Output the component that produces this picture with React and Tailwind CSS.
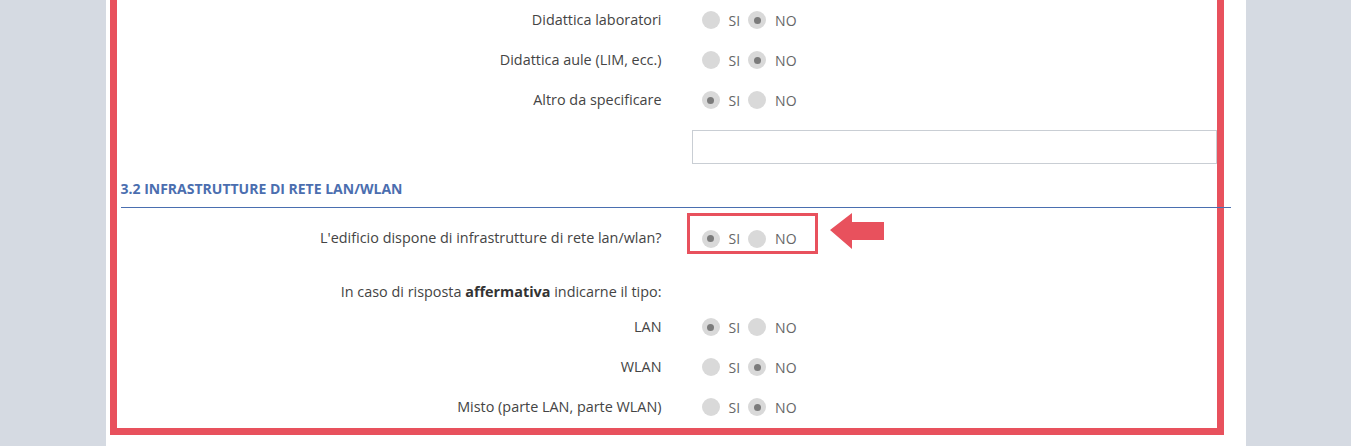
const Radio = ({ checked }) => (
  <span className="flex h-[18px] w-[18px] items-center justify-center rounded-full bg-[#d9d9d9]">
    {checked && <span className="h-[7px] w-[7px] rounded-full bg-[#7b7b7b]" />}
  </span>
);

const SiNo = ({ value }) => (
  <div className="flex items-center text-[14px] text-[#666]">
    <Radio checked={value === 'si'} />
    <span className="ml-[9px] mr-[8px]">SI</span>
    <Radio checked={value === 'no'} />
    <span className="ml-[9px]">NO</span>
  </div>
);

const Row = ({ label, value }) => (
  <div className="flex h-[40px] items-center">
    <div className="w-[545px] text-right">{label}</div>
    <div className="ml-[29px] pl-[11px]">
      <SiNo value={value} />
    </div>
  </div>
);

const Arrow = () => (
  <svg width="56" height="38" viewBox="0 0 56 38" className="ml-[11px] mt-[-1px]">
    <path d="M1 18 L23 1 L23 10 L55 10 L55 28 L23 28 L23 37 Z" fill="#e8515d" />
  </svg>
);

export default function App() {
  return (
    <div
      className="flex h-[446px] w-full justify-center bg-[#d5dae2] text-[14.4px] text-[#444]"
      style={{ fontFamily: '"Open Sans", "Liberation Sans", sans-serif' }}
    >
      <div className="h-full w-[1140px] bg-white pl-[4px] pr-[22px]">
        <div className="border-x-[7px] border-b-[7px] border-t-0 border-[#e8515d] pb-[1px]">
          <Row label="Didattica laboratori" value="no" />
          <Row label="Didattica aule (LIM, ecc.)" value="no" />
          <Row label="Altro da specificare" value="si" />

          <div className="ml-[575px] mt-[10px] h-[34px] w-[525px] border border-[#c9ced4] bg-white" />

          <div className="mt-[12px] h-[24px] pl-[4px] text-[14px] font-bold leading-[26px] text-[#4b6eaf]">
            3.2 INFRASTRUTTURE DI RETE LAN/WLAN
          </div>
          <div className="relative ml-[4px] mr-[-14px] mt-[7px] h-px bg-[#4a6fb0]" />

          <div className="mt-[5px] flex h-[41px] items-start">
            <div className="w-[545px] pt-[14px] text-right">
              L'edificio dispone di infrastrutture di rete lan/wlan?
            </div>
            <div className="ml-[25px] flex items-start">
              <div className="h-[41px] w-[131px] border-[3px] border-[#e8515d] pl-[12px] pt-[12px]">
                <SiNo value="si" />
              </div>
              <Arrow />
            </div>
          </div>

          <div className="mt-[26px] flex h-[24px] items-center">
            <div className="w-[545px] text-right">
              In caso di risposta <b className="font-bold text-[#333]">affermativa</b> indicarne il tipo:
            </div>
          </div>

          <div className="mt-[3px]">
            <Row label="LAN" value="si" />
            <Row label="WLAN" value="no" />
            <Row label="Misto (parte LAN, parte WLAN)" value="no" />
          </div>
        </div>
      </div>
    </div>
  );
}
